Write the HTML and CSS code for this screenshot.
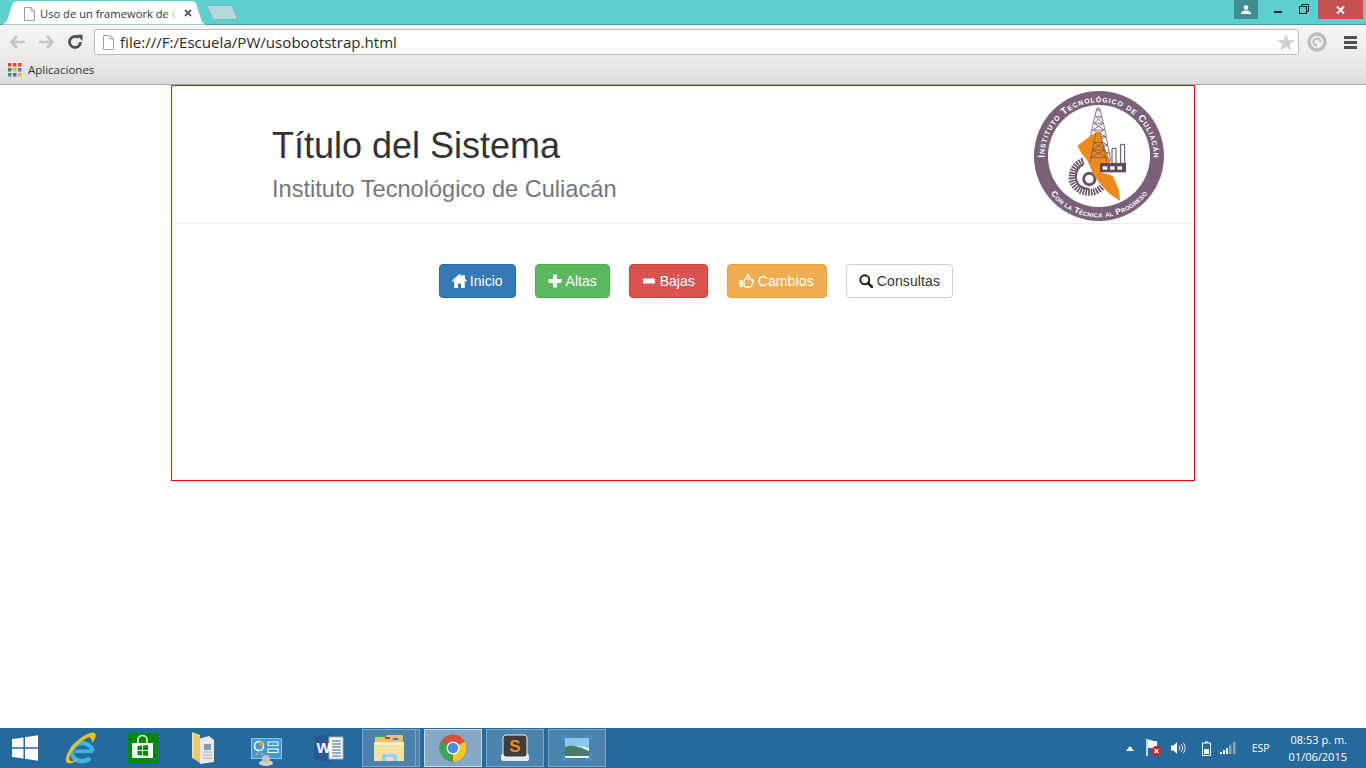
FILE: index.html
```html
<!DOCTYPE html>
<html lang="es">
<head>
<meta charset="utf-8">
<title>Uso de un framework de CSS</title>
<link rel="stylesheet" href="styles.css">
</head>
<body>
<div class="titlebar">
  <div class="tab">
    <svg class="tab-shape" width="208" height="25" viewBox="0 0 208 25"><path d="M0 24.500C4 24.500 6 23 7.500 19L12 5C13 2 14.500 1 18 1H191C194 1 195.500 2 196.500 5L201 19C202 23 204 24.500 208 24.500Z" fill="#fff"/></svg>
    <svg class="doc-icon tab-doc" width="12" height="14" viewBox="0 0 12 14"><path d="M1.500.5H8L11.500 4V13.500H1.500Z" fill="#fff" stroke="#9a9a9a"/><path d="M8 .5V4H11.500" fill="none" stroke="#9a9a9a"/></svg>
    <span class="tab-title">Uso de un framework de C</span>
    <span class="tab-fade"></span>
    <svg class="tab-close" width="8" height="8" viewBox="0 0 8 8"><path d="M1 1L7 7M7 1L1 7" stroke="#5a5a5a" stroke-width="1.800"/></svg>
  </div>
  <svg class="newtab" width="31" height="15" viewBox="0 0 31 15"><path d="M1 .5H23C24 .5 25 1 25.500 2L30 12C30.500 13.500 30 14.500 28 14.500H8C7 14.500 6 14 5.500 13L.5 2C.2 1 .3 .5 1 .5Z" fill="#b5d8de" stroke="#7fb4b8"/></svg>
  <div class="winctl">
    <div class="ctl-profile"><svg width="10" height="9" viewBox="0 0 10 9"><circle cx="5" cy="2.500" r="2.300" fill="#fff"/><path d="M0 9V7.500L3 5.500H7L10 7.500V9Z" fill="#fff"/></svg></div>
    <div class="ctl-min"><span class="min-bar"></span></div>
    <div class="ctl-restore"><svg width="10" height="10" viewBox="0 0 10 10"><path d="M2.500 2V.5H9.500V7.500H8" fill="none" stroke="#222"/><rect x=".5" y="2.500" width="7" height="7" fill="none" stroke="#222"/></svg></div>
    <div class="ctl-close"><svg width="9" height="8" viewBox="0 0 9 8"><path d="M1 .5L8 7.500M8 .5L1 7.500" stroke="#fff" stroke-width="2"/></svg></div>
  </div>
</div>

<div class="toolbar">
  <svg class="tb-back" width="16" height="14" viewBox="0 0 16 14"><path d="M7 1L1.500 7L7 13M2 7H15" fill="none" stroke="#c4c4c4" stroke-width="2.600"/></svg>
  <svg class="tb-fwd" width="16" height="14" viewBox="0 0 16 14"><path d="M9 1L14.500 7L9 13M14 7H1" fill="none" stroke="#c4c4c4" stroke-width="2.600"/></svg>
  <svg class="tb-reload" width="16" height="16" viewBox="0 0 16 16"><path d="M13.500 8A5.500 5.500 0 1 1 11.500 3.700" fill="none" stroke="#505050" stroke-width="2.800"/><path d="M9.500 .8H15.500V7Z" fill="#505050"/></svg>
  <div class="omnibox">
    <svg class="doc-icon" width="12" height="15" viewBox="0 0 12 15"><path d="M1.500.5H8L11.500 4V14.500H1.500Z" fill="#fff" stroke="#a0a0a0"/><path d="M8 .5V4H11.500" fill="none" stroke="#a0a0a0"/></svg>
    <span class="url">file:///F:/Escuela/PW/usobootstrap.html</span>
    <svg class="star" width="18" height="17" viewBox="0 0 18 17"><path d="M9 0L11.300 6H17.800L12.600 10L14.500 16.500L9 12.800L3.500 16.500L5.400 10L.2 6H6.700Z" fill="#d0d0d0"/></svg>
  </div>
  <svg class="tb-ext" width="20" height="20" viewBox="0 0 20 20"><circle cx="10" cy="10" r="8" fill="none" stroke="#bcbcbc" stroke-width="3.400"/><path d="M10 13.500A3.500 3.500 0 1 1 13.500 10" fill="none" stroke="#bcbcbc" stroke-width="2"/></svg>
  <div class="tb-menu"><span></span><span></span><span></span></div>
</div>

<div class="bookmarks">
  <svg class="apps" width="14" height="14" viewBox="0 0 14 14">
    <rect x="0" y="0" width="3.500" height="3.500" fill="#e0463c"/><rect x="5" y="0" width="3.500" height="3.500" fill="#e0463c"/><rect x="10" y="0" width="3.500" height="3.500" fill="#e0463c"/>
    <rect x="0" y="5" width="3.500" height="3.500" fill="#3f8f4f"/><rect x="5" y="5" width="3.500" height="3.500" fill="#f0b030"/><rect x="10" y="5" width="3.500" height="3.500" fill="#4a86e0"/>
    <rect x="0" y="10" width="3.500" height="3.500" fill="#3f9f4f"/><rect x="5" y="10" width="3.500" height="3.500" fill="#3a70d0"/><rect x="10" y="10" width="3.500" height="3.500" fill="#f5b010"/>
  </svg>
  <span class="bm-label">Aplicaciones</span>
</div>

<main class="viewport">
  <div class="container">
    <header class="page-header">
      <h1 class="title">Título del Sistema<small class="subtitle">Instituto Tecnológico de Culiacán</small></h1>
      <svg class="logo" width="130" height="130" viewBox="42 18 390 390">
        <defs>
          <path id="arcTop" d="M74 228A163.500 163.500 0 1 1 400 228"/>
          <path id="arcBottom" d="M77 305A185 185 0 0 0 397 305"/>
        </defs>
        <circle cx="237" cy="213" r="195" fill="#7a6078"/>
        <circle cx="237" cy="213" r="153" fill="#fff"/>
        <text class="logo-top"><textPath href="#arcTop" startOffset="50%" text-anchor="middle" textLength="520">Instituto Tecnológico de Culiacán</textPath></text>
        <text class="logo-bottom"><textPath href="#arcBottom" startOffset="50%" text-anchor="middle" textLength="335">Con la Técnica al Progreso</textPath></text>
        <g fill="none" stroke="#8a7488" stroke-width="3">
          <path d="M230 72L214 140L205 225M240 72L256 140L272 228M226 95H244M222 115H249M218 135H253M214 155H258M210 180H263M207 205H268M226 95L249 115L218 135L258 155L210 180L268 205M244 95L222 115L253 135L214 155L263 180L207 205"/>
        </g>
        <path d="M235 64l3 6 6 1-5 4 1 6-5-3-5 3 1-6-5-4 6-1Z" fill="#a898a6"/>
        <path d="M190 228C170 235 154 255 156 280C158 305 180 322 208 322C225 322 238 315 246 305" fill="none" stroke="#6a5268" stroke-width="20" stroke-dasharray="5 3"/>
        <path d="M190 238C175 245 166 260 168 280C170 300 188 312 208 312" fill="none" stroke="#6a5268" stroke-width="6"/>
        <circle cx="208" cy="282" r="17" fill="none" stroke="#6a5268" stroke-width="9"/>
        <path d="M172 182L192 168L214 150L238 138L252 185L272 232L242 262L278 272L298 318L300 348L268 326L240 296L220 268L203 228L184 204Z" fill="#ee8a1c"/>
        <g fill="none" stroke="#7a5c4a" stroke-width="2.500">
          <path d="M228 143L210 232M240 143L262 232M220 172H250M216 195H256M210 218H262M220 172L256 195L210 218M250 172L216 195L262 218"/>
        </g>
        <path d="M276 235V190H288V235ZM302 235V178H314V235Z" fill="#fff" stroke="#5f4a5d" stroke-width="3"/>
        <rect x="240" y="234" width="78" height="28" fill="#5f4a5d"/>
        <rect x="248" y="244" width="14" height="10" fill="#fff"/><rect x="270" y="244" width="14" height="10" fill="#fff"/><rect x="292" y="244" width="14" height="10" fill="#fff"/>
      </svg>
    </header>
    <nav class="actions">
      <a class="btn btn-primary"><svg class="gi gi-home" width="15" height="14" viewBox="0 0 15 14"><path d="M7.500 0L10.500 2.600V1H13V4.800L15 6.600L14 7.800L12.800 6.800V14H9V9.500H6V14H2.200V6.800L1 7.800L0 6.600Z" fill="#fff"/></svg>Inicio</a>
      <a class="btn btn-success"><svg class="gi" width="14" height="14" viewBox="0 0 14 14"><path d="M5 .5H9V5H13.500V9H9V13.500H5V9H.5V5H5Z" fill="#fff"/></svg>Altas</a>
      <a class="btn btn-danger"><svg class="gi" width="14" height="14" viewBox="0 0 14 14"><rect x="1" y="4.500" width="12" height="5" rx=".5" fill="#fff"/></svg>Bajas</a>
      <a class="btn btn-warning btn-wide"><svg class="gi gi-thumb" width="15" height="14" viewBox="0 0 15 14"><rect x=".5" y="6" width="3" height="7" rx=".8" fill="#fff"/><path d="M5 6.500L7.500 3.500C8 2.500 8 1.500 8.500 1C10 .5 10.500 2 10 3.500L9.500 5.500H13C14.200 5.500 14.500 6.500 14 7.500L12.500 12C12.200 12.800 11.800 13 11 13H6.500L5 12Z" fill="none" stroke="#fff" stroke-width="1.400"/></svg>Cambios</a>
      <a class="btn btn-default btn-wide"><svg class="gi" width="14" height="14" viewBox="0 0 14 14"><circle cx="5.800" cy="5.800" r="4.500" fill="none" stroke="#222" stroke-width="2"/><path d="M9 9L13 13" stroke="#222" stroke-width="2.600" stroke-linecap="round"/></svg>Consultas</a>
    </nav>
  </div>
</main>

<footer class="taskbar">
  <div class="start">
    <svg width="26" height="26" viewBox="0 0 26 26"><path d="M0 4L11.500 2.400V12.300H0ZM13 2.200L26 .3V12.300H13ZM0 13.700H11.500V23.600L0 22ZM13 13.700H26V25.700L13 23.800Z" fill="#fff"/></svg>
  </div>
  <div class="slot">
    <svg width="32" height="34" viewBox="0 0 32 34">
      <path d="M27.500 20.500A10.500 9 0 1 0 25 27" fill="none" stroke="#3cb4ea" stroke-width="4.500"/>
      <rect x="10" y="18.500" width="18" height="3.600" fill="#3cb4ea"/>
      <path d="M25 2C29 .5 31.500 2 30.500 6C30 8 28.500 10 27 12C27 9 26 7.500 24.500 6C20 7.500 13 12 8 19C4 25 3 29 6 30C8 30.500 11 29 13 28C8 33 2 34 .8 30C0 26 4 18 11 11C16 6 21 3 25 2Z" fill="#f0c020"/>
    </svg>
  </div>
  <div class="slot">
    <svg width="30" height="30" viewBox="0 0 30 30"><rect width="30" height="30" fill="#008a00"/><path d="M10 10V7C10 1 19 1 19 7V10" fill="none" stroke="#fff" stroke-width="1.500"/><path d="M4 10H25V25H4Z" fill="#fff"/><path d="M9.500 13L14 12.500V17H9.500ZM15 12.400L20 12V17H15ZM9.500 18H14V22.500L9.500 22ZM15 18H20V23L15 22.500Z" fill="#008a00"/></svg>
  </div>
  <div class="slot">
    <svg class="ico-folder" width="23" height="32" viewBox="0 0 23 32"><path d="M0 0L8 3V29L0 26Z" fill="#f2d98c"/><path d="M6 7L17 4L22 8V30L8 32Z" fill="#e8e8e4"/><path d="M12 12H19V18H12Z" fill="#7f9fb0"/><path d="M11 20H20M11 23H20M11 26H20" stroke="#b0b0b0"/><path d="M2 2L8 5V31L2 27Z" fill="#e8c673"/></svg>
  </div>
  <div class="slot">
    <svg class="ico-panel" width="32" height="28" viewBox="0 0 32 28"><rect x=".5" y=".5" width="30" height="20" fill="#3f9ad8" stroke="#8cc4e8"/><circle cx="8" cy="8" r="4.500" fill="none" stroke="#fff" stroke-width="1.500"/><path d="M8 3.500V8H12.500A4.500 4.500 0 0 0 8 3.500Z" fill="#f09020"/><rect x="17" y="4" width="10" height="3.500" fill="none" stroke="#fff"/><rect x="17" y="11" width="10" height="3.500" fill="none" stroke="#fff"/><circle cx="6" cy="16" r="1.300" fill="#f0a030"/><circle cx="11" cy="16" r="1.300" fill="#f0a030"/><ellipse cx="15" cy="25" rx="7" ry="3" fill="#d8d4d0"/><circle cx="15" cy="21" r="4" fill="#c4c0bc"/></svg>
  </div>
  <div class="slot">
    <svg width="30" height="30" viewBox="0 0 30 30"><path d="M0 4L18 0V30L0 27Z" fill="#2b5797"/><rect x="15" y="4" width="14" height="22" fill="#fff" stroke="#9ab"/><path d="M18 8H27M18 11H27M18 14H27M18 17H27M18 20H27M18 23H27" stroke="#2b5797"/><text class="word-w" x="2.500" y="20">W</text></svg>
  </div>
  <div class="slot slot-open slot-explorer">
    <svg width="32" height="28" viewBox="0 0 32 28"><path d="M2 3H12L14 1H30V10H2Z" fill="#e8c168"/><rect x="5" y="1" width="6" height="2" fill="#2aa84a"/><rect x="12" y="3" width="5" height="2" fill="#d83a2a"/><rect x="20" y="4" width="5" height="2" fill="#3a80d8"/><path d="M1 8H31V27H1Z" fill="#f6e2a0"/><path d="M9 20H24V27H20V23H13V27H9Z" fill="#8fd6f0"/><path d="M1 8H31V11H1Z" fill="#fbeec4"/></svg>
    <span class="slot-sliver"></span>
  </div>
  <div class="slot slot-open slot-active">
    <svg width="28" height="28" viewBox="0 0 30 30">
      <circle cx="15" cy="15" r="14.500" fill="#dd4b39"/>
      <path d="M15 15L27.600 8C30 12 30 19 27 23C25 27 20 29.500 15 29.500Z" fill="#f6c924"/>
      <path d="M15 15L14 29.500C9 29 4.500 26 2.200 22C0 18 -.2 12 2 8Z" fill="#3aa655"/>
      <circle cx="15" cy="15" r="7" fill="#fff"/><circle cx="15" cy="15" r="5.500" fill="#4a8cdc"/>
    </svg>
  </div>
  <div class="slot slot-open">
    <svg width="30" height="28" viewBox="0 0 30 28"><rect x="1" y="20" width="28" height="7" rx="2" fill="#e8e8e8"/><rect x="3" y="1" width="24" height="22" rx="3" fill="#3d3d3d" stroke="#eee"/><text class="subl" x="15" y="18">S</text></svg>
  </div>
  <div class="slot slot-open">
    <svg width="30" height="26" viewBox="0 0 30 26"><rect x="3" y="3" width="24" height="20" fill="#eef6fa"/><path d="M3 3H27V13L18 11L3 13Z" fill="#8cc8ec"/><path d="M3 12C10 9 18 12 27 16V21H3Z" fill="#4a7a6a"/><path d="M1.200 6V1.200H7M23 1.200H28.800V6M28.800 20V24.800H23M7 24.800H1.200V20" fill="none" stroke="#3f90d8" stroke-width="2.500"/></svg>
  </div>
  <div class="tray">
    <svg class="tray-arrow" width="8" height="5" viewBox="0 0 8 5"><path d="M4 0L8 5H0Z" fill="#fff"/></svg>
    <svg class="tray-flag" width="16" height="18" viewBox="0 0 16 18"><path d="M1 0V17" stroke="#fff" stroke-width="1.500"/><path d="M2 1C5 0 7 3 11 2V10C7 11 5 8 2 9Z" fill="#fff"/><circle cx="10.500" cy="12" r="5" fill="#d81e2a"/><path d="M8.500 10L12.500 14M12.500 10L8.500 14" stroke="#fff" stroke-width="1.300"/></svg>
    <svg class="tray-speaker" width="15" height="14" viewBox="0 0 15 14"><path d="M0 4.500H2.500L6 1V13L2.500 9.500H0Z" fill="#fff"/><path d="M8 4.500C9.200 6 9.200 8 8 9.500M10 3C12 5 12 9 10 11M12 1.500C14.800 4.500 14.800 9.500 12 12.500" fill="none" stroke="#dfe8f0" stroke-width="1"/></svg>
    <svg class="tray-battery" width="9" height="15" viewBox="0 0 9 15"><path d="M3 .5H6V2H3Z" fill="#fff"/><rect x=".5" y="2" width="8" height="12.500" fill="none" stroke="#fff"/><rect x="2" y="8" width="5" height="5" fill="#fff"/></svg>
    <svg class="tray-signal" width="16" height="12" viewBox="0 0 16 12"><rect x="0" y="10" width="2" height="2" fill="#fff"/><rect x="3" y="8" width="2" height="4" fill="#fff"/><rect x="6" y="6" width="2" height="6" fill="#fff"/><rect x="9" y="3" width="2.500" height="9" fill="#8aa5ba"/><rect x="13" y="0" width="2.500" height="12" fill="#8aa5ba"/></svg>
    <span class="tray-lang">ESP</span>
    <div class="clock"><span>08:53 p. m.</span><span>01/06/2015</span></div>
  </div>
</footer>
</body>
</html>
```

FILE: styles.css
```css
* { box-sizing: border-box; }
html, body { margin: 0; padding: 0; }
body {
  width: 1366px;
  height: 768px;
  overflow: hidden;
  display: flex;
  flex-direction: column;
  background: #fff;
  font-family: "Liberation Sans", Arial, sans-serif;
}

/* browser title strip */
.titlebar {
  height: 25px;
  flex: none;
  display: flex;
  align-items: flex-start;
  background: #5ccfcf;
  border-bottom: 1px solid #419c9c;
}
.tab {
  position: relative;
  width: 207px;
  height: 25px;
  flex: none;
  display: flex;
  align-items: center;
  padding: 3px 0 1px 23px;
  font: 11.200px "Open Sans", sans-serif;
  color: #333;
}
.tab-shape { position: absolute; left: 0; top: 0; }
.tab-doc { position: relative; flex: none; }
.tab-title { position: relative; margin-left: 5px; white-space: nowrap; }
.tab-fade { position: absolute; left: 164px; top: 4px; width: 20px; height: 18px; background: linear-gradient(90deg, rgba(255,255,255,0), #fff 70%); }
.tab-close { position: absolute; left: 184px; top: 9px; }
.newtab { flex: none; margin: 5px 0 0 0; }
.winctl { margin-left: auto; display: flex; height: 19px; padding-right: 3px; }
.ctl-profile { width: 24px; background: #408c8f; display: flex; align-items: center; justify-content: center; }
.ctl-min { width: 36px; position: relative; }
.min-bar { position: absolute; left: 16px; top: 11px; width: 8px; height: 2px; background: #222; }
.ctl-restore { width: 24px; display: flex; align-items: flex-start; justify-content: center; padding: 4px 4px 0 0; }
.ctl-close { width: 45px; background: #c75050; display: flex; align-items: center; justify-content: center; }

/* browser toolbar */
.toolbar {
  height: 32px;
  flex: none;
  display: flex;
  align-items: center;
  padding: 2px 0 0 10px;
  background: linear-gradient(#f6f6f6, #ebebeb);
}
.tb-back { flex: none; }
.tb-fwd { flex: none; margin-left: 12px; }
.tb-reload { flex: none; margin-left: 13px; }
.omnibox {
  flex: none;
  width: 1205px;
  height: 26px;
  margin-left: 11px;
  background: #fff;
  border: 1px solid #bcbcbc;
  border-radius: 2px;
  display: flex;
  align-items: center;
  padding: 0 3px 0 7px;
}
.url { margin-left: 6px; font: 15.100px "Open Sans", sans-serif; color: #2a2a2a; }
.star { margin-left: auto; }
.tb-ext { flex: none; margin-left: 8px; }
.tb-menu { flex: none; margin-left: 17px; width: 13px; display: flex; flex-direction: column; gap: 2px; }
.tb-menu span { height: 3px; background: #505050; }

.bookmarks {
  height: 28px;
  flex: none;
  display: flex;
  align-items: center;
  padding: 0 0 2px 8px;
  background: linear-gradient(#ebebeb, #dcdcdc);
  border-bottom: 1px solid #a8a8a8;
}
.bm-label { margin-left: 6px; font: 11.500px "Open Sans", sans-serif; color: #333; }

/* page */
.viewport { flex: 1; min-height: 0; }
.container {
  width: 1024px;
  height: 396px;
  margin: 0 auto;
  border: 1px solid #f00;
}
.page-header {
  height: 138px;
  display: flex;
  align-items: flex-start;
  justify-content: space-between;
  padding: 5px 30px 0 100px;
  border-bottom: 1px solid #eee;
}
.title {
  margin: 35px 0 0;
  font-size: 36px;
  font-weight: 500;
  line-height: 39.600px;
  color: #333;
}
.subtitle {
  display: block;
  margin-top: 11px;
  font-size: 23.600px;
  line-height: 1.1;
  font-weight: 400;
  color: #777;
}
.logo { flex: none; }
.logo-top, .logo-bottom { fill: #fff; font-family: "Liberation Sans", sans-serif; font-variant: small-caps; font-weight: 700; }
.logo-top { font-size: 29px; }
.logo-bottom { font-size: 25px; }

.actions {
  display: flex;
  justify-content: center;
  gap: 19px;
  padding: 40px 0 0 26px;
}
.btn {
  display: flex;
  align-items: center;
  height: 34px;
  padding: 0 12px;
  border: 1px solid transparent;
  border-radius: 4px;
  font-size: 14px;
  color: #fff;
  white-space: nowrap;
}
.btn-wide { letter-spacing: .12px; }
.gi { flex: none; margin-right: 4px; }
.gi-home { margin-right: 3px; }
.gi-thumb { margin-left: -1px; }
.btn-primary { background: #337ab7; border-color: #2e6da4; }
.btn-success { background: #5cb85c; border-color: #4cae4c; }
.btn-danger { background: #d9534f; border-color: #d43f3a; }
.btn-warning { background: #f0ad4e; border-color: #eea236; }
.btn-default { background: #fff; border-color: #ccc; color: #333; }

/* Windows taskbar */
.taskbar {
  height: 40px;
  flex: none;
  display: flex;
  align-items: center;
  background: #256a9c;
  font-family: "Open Sans", sans-serif;
}
.start { width: 52px; flex: none; display: flex; justify-content: center; padding-right: 2px; }
.slot {
  position: relative;
  width: 58px;
  height: 38px;
  flex: none;
  margin-right: 4px;
  display: flex;
  align-items: center;
  justify-content: center;
}
.slot-open { background: #4b83ac; border: 1px solid #7fa7c4; }
.slot-active { background: #84a9c5; border: 1px solid #c8d8e4; }
.slot-explorer { padding-right: 5px; }
.slot-sliver { position: absolute; right: 0; top: 0; bottom: 0; width: 4px; background: #4b83ac; border-left: 1px solid #7fa7c4; }
.ico-folder { margin-right: 3px; }
.ico-panel { margin-top: 7px; }
.word-w { font: 700 15px "Liberation Sans", sans-serif; fill: #fff; }
.subl { font: 700 17px "Liberation Sans", sans-serif; fill: #f08a24; text-anchor: middle; }
.tray { margin-left: auto; display: flex; align-items: center; color: #fff; font-size: 11px; padding-right: 19px; }
.tray-arrow { margin-right: 12px; }
.tray-flag { margin-right: 9px; }
.tray-speaker { margin-right: 16px; }
.tray-battery { margin-right: 9px; }
.tray-signal { margin-right: 16px; }
.tray-lang { margin-right: 19px; font-size: 10.500px; }
.clock { display: flex; flex-direction: column; align-items: flex-end; line-height: 17px; font-size: 11px; }
```
